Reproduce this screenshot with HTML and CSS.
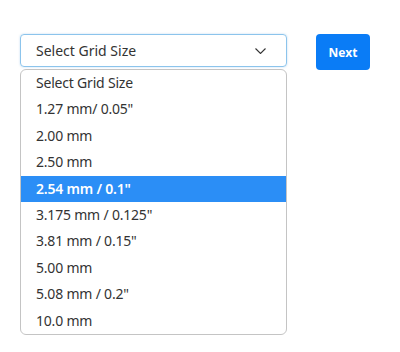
FILE: index.html
```html
<!DOCTYPE html>
<html lang="en">
<head>
    <meta charset="UTF-8">
    <meta name="viewport" content="width=device-width, initial-scale=1.0">
    <title>Grid Size</title>
    <link rel="stylesheet" href="styles.css">
</head>
<body>
    <div class="container">
        <div class="select-wrap">
            <div class="select-box">
                <span>Select Grid Size</span>
                <svg class="chevron" width="11" height="6" viewBox="0 0 11 6">
                    <path d="M0.5 0.5 L5.5 5.5 L10.5 0.5" fill="none" stroke="#333" stroke-width="1.1"/>
                </svg>
            </div>
            <ul class="options">
                <li>Select Grid Size</li>
                <li>1.27 mm/ 0.05"</li>
                <li>2.00 mm</li>
                <li>2.50 mm</li>
                <li class="selected">2.54 mm / 0.1"</li>
                <li>3.175 mm / 0.125"</li>
                <li>3.81 mm / 0.15"</li>
                <li>5.00 mm</li>
                <li>5.08 mm / 0.2"</li>
                <li>10.0 mm</li>
            </ul>
        </div>
        <button class="next">Next</button>
    </div>
</body>
</html>
```

FILE: styles.css
```css
body {
    font-family: 'Noto Sans', 'Open Sans', sans-serif;
    background-color: #fff;
    margin: 0;
    color: #333;
}

.container {
    display: flex;
    align-items: flex-start;
    gap: 29px;
    padding: 34px 0 0 20px;
}

.select-wrap {
    width: 267px;
}

.select-box {
    height: 33px;
    box-sizing: border-box;
    border: 1px solid #8cc4ec;
    border-radius: 4px;
    box-shadow: 0 0 2px rgba(120, 180, 230, 0.5);
    display: flex;
    align-items: center;
    justify-content: space-between;
    padding: 0 20px 0 15px;
    font-size: 14px;
}

.options {
    list-style: none;
    margin: 2px 0 0;
    padding: 0;
    border: 1px solid #c4c4c4;
    border-radius: 6px;
    overflow: hidden;
    font-size: 14px;
}

.options li {
    height: 26.4px;
    line-height: 26.4px;
    padding-left: 15px;
    letter-spacing: -0.2px;
}

.options li.selected {
    background-color: #2b8ef6;
    color: #fff;
    font-weight: 600;
}

button.next {
    width: 54px;
    height: 36px;
    border: none;
    border-radius: 4px;
    background-color: #0a7cf6;
    color: #fff;
    font-family: 'Noto Sans', sans-serif;
    font-weight: 700;
    font-size: 12px;
    cursor: pointer;
}
```
